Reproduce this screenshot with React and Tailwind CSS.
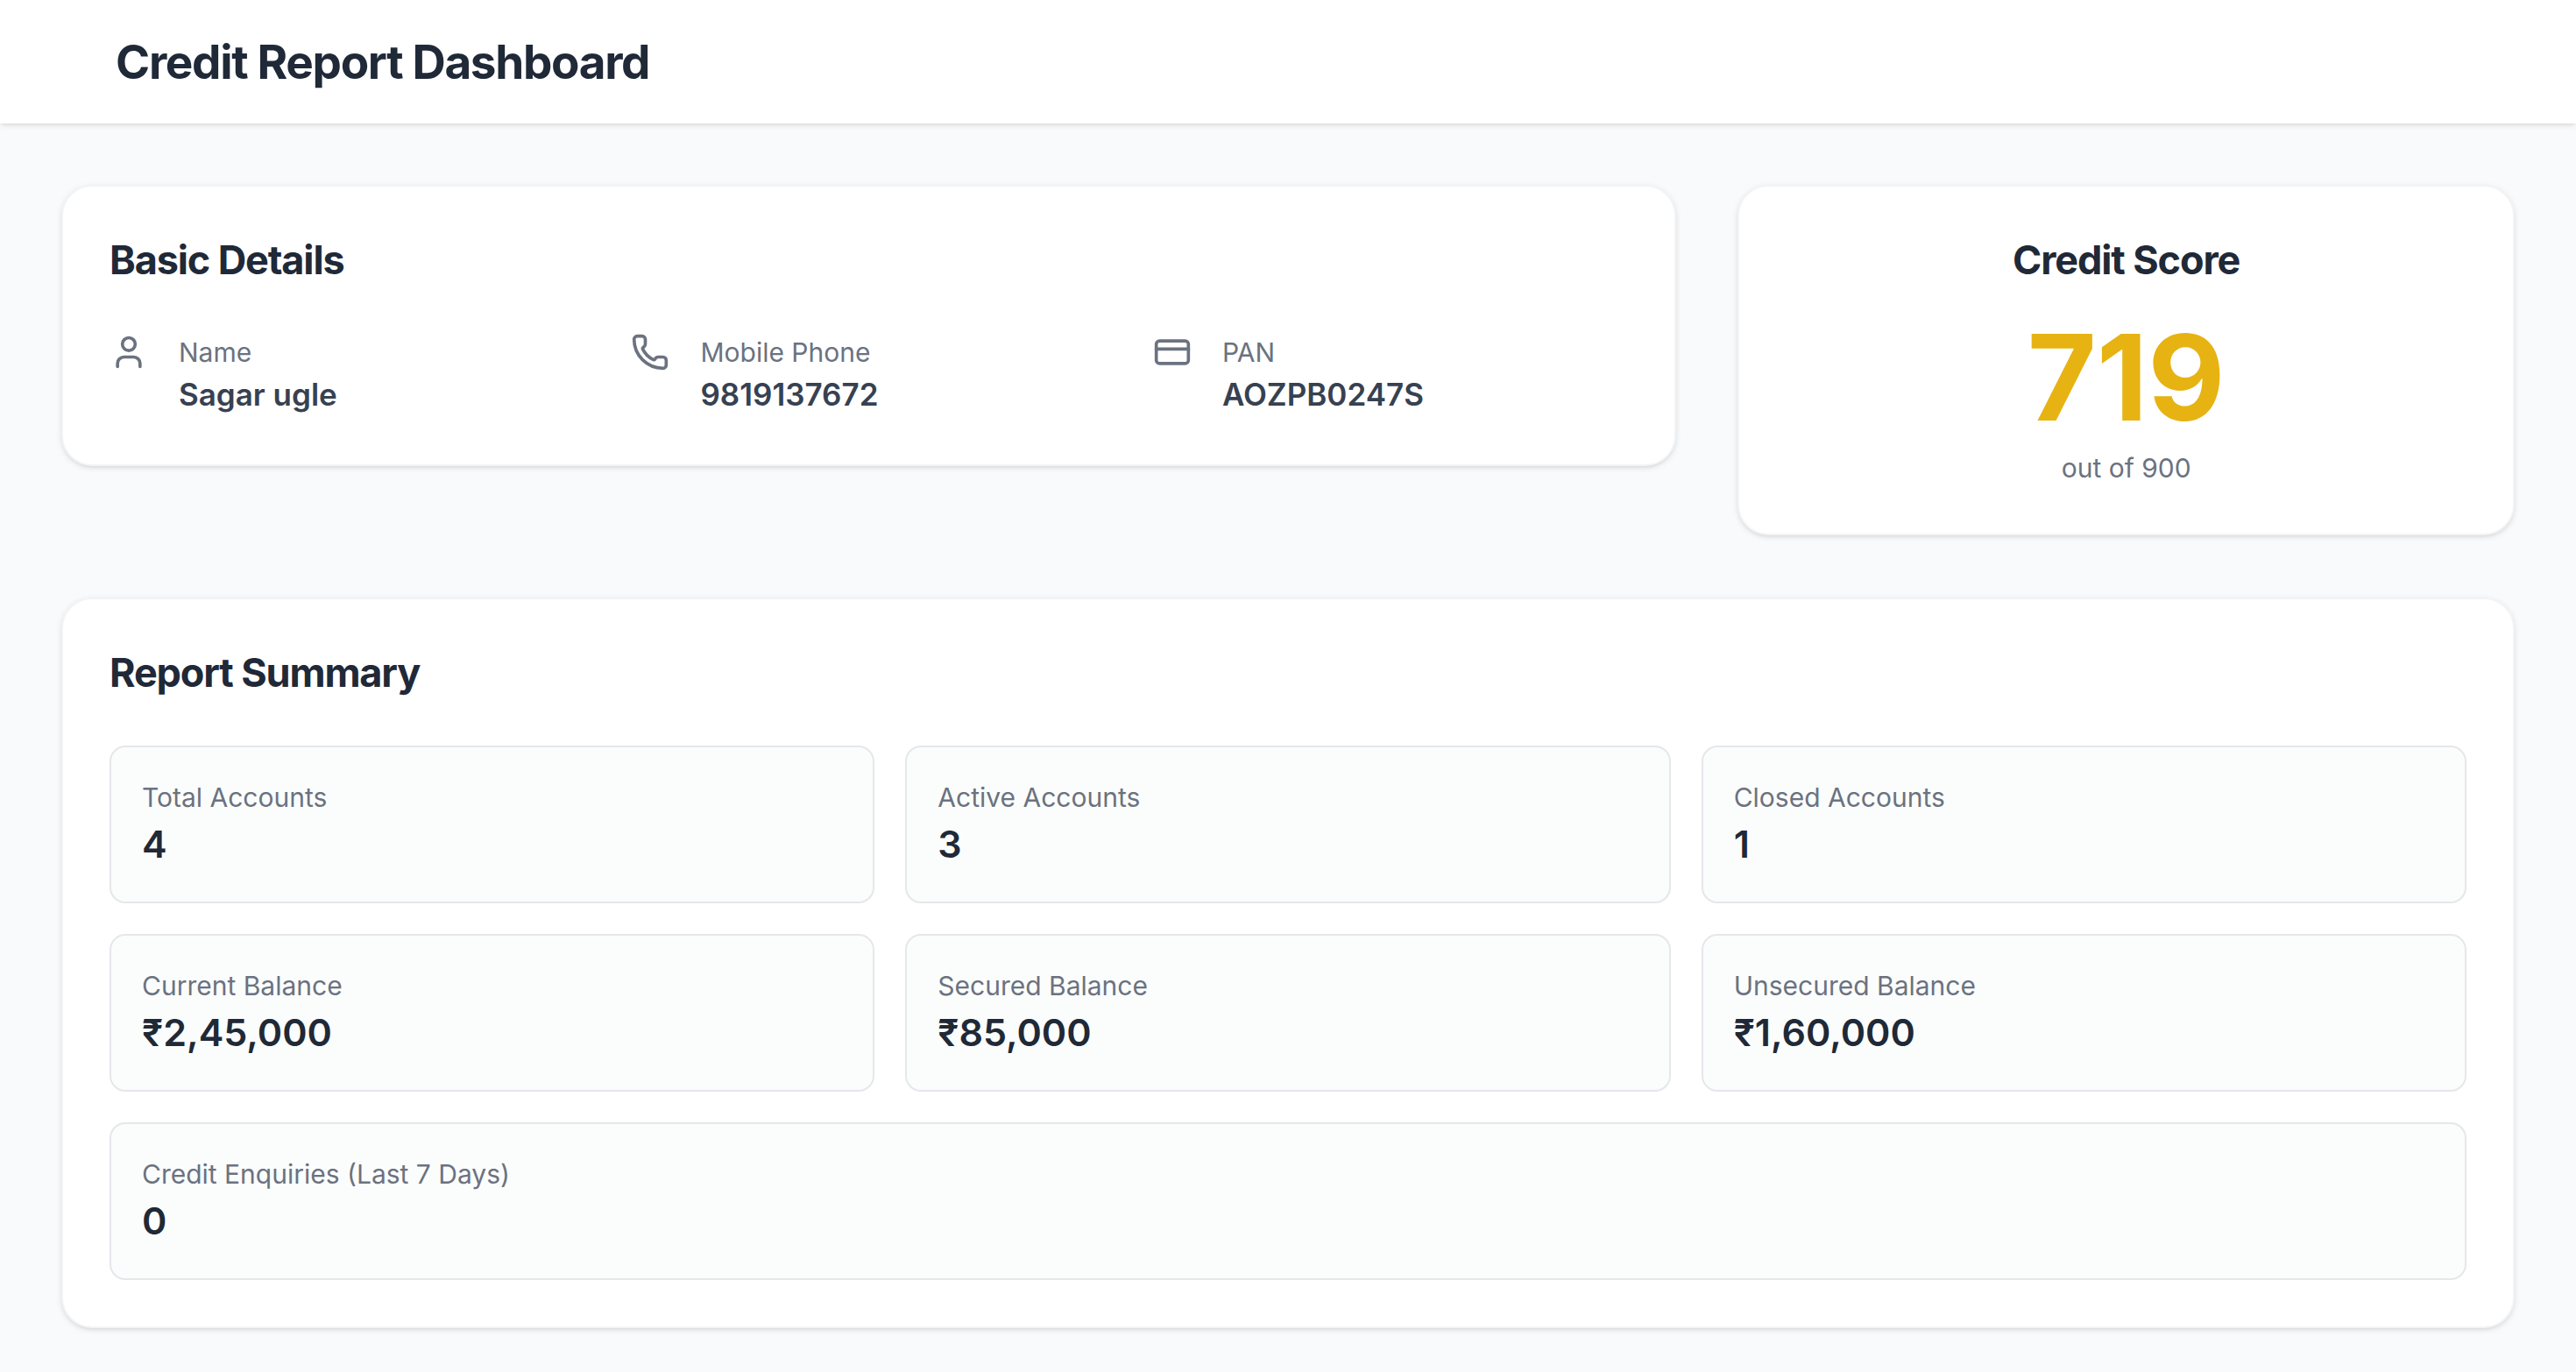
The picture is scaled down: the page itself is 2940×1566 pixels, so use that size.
import { User, Phone, CreditCard } from "lucide-react";

const details = [
  { label: "Name", value: "Sagar ugle", Icon: User },
  { label: "Mobile Phone", value: "9819137672", Icon: Phone },
  { label: "PAN", value: "AOZPB0247S", Icon: CreditCard },
];

const stats = [
  { label: "Total Accounts", value: "4" },
  { label: "Active Accounts", value: "3" },
  { label: "Closed Accounts", value: "1" },
  { label: "Current Balance", value: "₹2,45,000" },
  { label: "Secured Balance", value: "₹85,000" },
  { label: "Unsecured Balance", value: "₹1,60,000" },
  { label: "Credit Enquiries (Last 7 Days)", value: "0", wide: true },
];

function Card({ className = "", children }) {
  return (
    <section
      className={`rounded-[35px] border-2 border-[#f3f4f6] bg-white p-[53px] shadow-[0_2px_7px_0_rgb(0_0_0/0.1),0_2px_4px_-2px_rgb(0_0_0/0.1)] ${className}`}
    >
      {children}
    </section>
  );
}

function CardTitle({ className = "", children }) {
  return (
    <h2 className={`text-[45px] leading-[62px] font-bold tracking-tight text-[#1f2937] ${className}`}>
      {children}
    </h2>
  );
}

function Detail({ label, value, Icon }) {
  return (
    <div className="flex items-start gap-[35px]">
      <Icon className="size-11 shrink-0 text-[#6b7280]" aria-hidden="true" />
      <dl>
        <dt className="text-[30px] leading-[44px] text-[#6b7280]">{label}</dt>
        <dd className="text-[35px] leading-[53px] font-semibold text-[#374151]">{value}</dd>
      </dl>
    </div>
  );
}

function Stat({ label, value, wide }) {
  return (
    <dl
      className={`rounded-[18px] border-2 border-[#e5e7eb] bg-[#fbfdfc] p-[35px] ${wide ? "col-span-3" : ""}`}
    >
      <dt className="text-[30px] leading-[44px] text-[#6b7280]">{label}</dt>
      <dd className="text-[43px] leading-[62px] font-semibold text-[#1f2937]">{value}</dd>
    </dl>
  );
}

export default function App() {
  return (
    <div className="min-h-screen bg-[#f9fafc] font-['Inter',sans-serif] antialiased">
      <header className="bg-white shadow-[0_2px_7px_0_rgb(0_0_0/0.1),0_2px_4px_-2px_rgb(0_0_0/0.1)]">
        <div className="mx-auto max-w-[2816px] px-[70px] pt-9 pb-[34px]">
          <h1 className="text-[53px] leading-[71px] font-bold tracking-tight text-[#1f2937]">
            Credit Report Dashboard
          </h1>
        </div>
      </header>
      <main className="flex flex-col gap-[71px] p-[70px]">
        <div className="grid grid-cols-3 items-start gap-[70px]">
          <Card className="col-span-2">
            <CardTitle className="mb-[52px]">Basic Details</CardTitle>
            <div className="grid grid-cols-3 gap-[53px]">
              {details.map((item) => (
                <Detail key={item.label} {...item} />
              ))}
            </div>
          </Card>
          <Card className="text-center">
            <CardTitle className="mb-[35px]">Credit Score</CardTitle>
            <p className="text-[136px] leading-[136px] font-bold text-[#e7b313]">719</p>
            <p className="mt-[13px] text-[30px] leading-[44px] text-[#6b7280]">out of 900</p>
          </Card>
        </div>
        <Card>
          <CardTitle className="mb-[52px]">Report Summary</CardTitle>
          <div className="grid grid-cols-3 gap-[35px]">
            {stats.map((item) => (
              <Stat key={item.label} {...item} />
            ))}
          </div>
        </Card>
      </main>
    </div>
  );
}
